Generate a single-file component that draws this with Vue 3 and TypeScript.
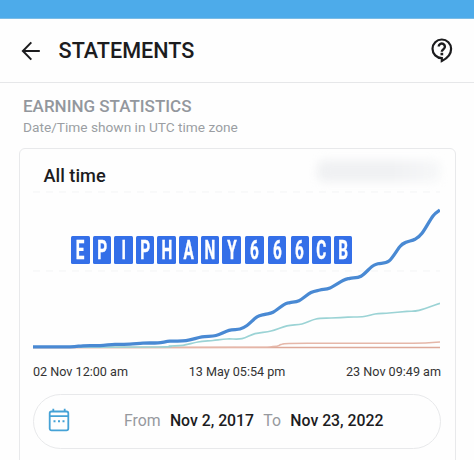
<template>
  <div class="screen">
    <div class="status-bar"></div>

    <header class="header">
      <svg class="back-icon" viewBox="0 0 20 20" aria-label="Back">
        <path d="M10.3 1.4 1.9 10 10.3 18.6M2.2 10H18.8" />
      </svg>
      <h1 class="title">STATEMENTS</h1>
      <svg class="help-icon" viewBox="0 0 22 25" aria-label="Help">
        <path class="help-bubble" d="M10.8 1.5a9.3 9.3 0 0 0 0 18.6V23C16.4 20.4 20.1 16 20.1 10.8A9.3 9.3 0 0 0 10.8 1.5Z" />
        <path class="help-mark" d="M7.7 8.6a3.1 3.1 0 1 1 4.9 2.5c-1.2.9-1.8 1.3-1.8 2.6" />
        <rect x="9.5" y="14.8" width="2.7" height="2.5" />
      </svg>
    </header>

    <section class="intro">
      <h2 class="intro-title">EARNING STATISTICS</h2>
      <p class="intro-note">Date/Time shown in UTC time zone</p>
    </section>

    <section class="card">
      <div class="card-head">
        <span class="card-title">All time</span>
        <span class="hidden-amount"></span>
      </div>

      <div class="chart">
        <svg class="chart-svg" viewBox="0 0 407 166">
          <line
            v-for="y in gridLines"
            :key="y"
            class="grid-line"
            x1="0"
            x2="407"
            :y1="y"
            :y2="y"
          />
          <path
            v-for="line in series"
            :key="line.name"
            :class="['line', line.name]"
            :d="smoothPath(line.points)"
          />
        </svg>
        <div class="watermark">
          <span
            v-for="(char, index) in watermark"
            :key="index"
            class="tile"
            :class="{ digit: isDigit(char) }"
          ><span class="char">{{ char }}</span></span>
        </div>
      </div>

      <div class="axis">
        <span v-for="label in axisLabels" :key="label">{{ label }}</span>
      </div>

      <div class="range">
        <svg class="calendar-icon" viewBox="0 0 22 24">
          <rect x="1.7" y="3.5" width="18.6" height="18.8" rx="1.8" />
          <path d="M1.7 8.2H20.3M5.3 .8V3.5M16.7 .8V3.5" />
          <path class="calendar-dots" d="M5.5 13.2h2M10 13.2h2M14.5 13.2h2" />
        </svg>
        <div class="range-text">
          <span class="range-label">From</span>
          <span class="range-date">{{ range.from }}</span>
          <span class="range-label">To</span>
          <span class="range-date">{{ range.to }}</span>
        </div>
      </div>
    </section>
  </div>
</template>

<script setup lang="ts">
type Point = [number, number]

interface Series {
  name: string
  points: Point[]
}

const watermark = [...'EPIPHANY666CB']
const axisLabels = ['02 Nov 12:00 am', '13 May 05:54 pm', '23 Nov 09:49 am']
const range = { from: 'Nov 2, 2017', to: 'Nov 23, 2022' }
const gridLines = [6, 85]

const series: Series[] = [
  {
    name: 'baseline',
    points: [[0, 161.5], [407, 161.5]]
  },
  {
    name: 'minor',
    points: [[0, 161.4], [205, 161.3], [240, 160.6], [248, 158.6], [256, 157.4], [300, 157.3], [380, 157.3], [407, 156]]
  },
  {
    name: 'secondary',
    points: [
      [0, 161.2], [125, 161], [137, 160], [150, 159.4], [165, 156], [180, 154.5], [194, 153],
      [209, 152.7], [222, 147.6], [238, 145], [254, 139.8], [269, 138], [283, 133], [298, 132],
      [315, 131.2], [331, 130.5], [342, 128], [356, 127], [374, 125.4], [386, 124.4], [407, 117.3]
    ]
  },
  {
    name: 'primary',
    points: [
      [0, 160.8], [37, 160.8], [50, 159.8], [67, 159.6], [82, 158.4], [97, 158.2], [110, 157.1],
      [125, 156.8], [137, 155.2], [153, 154.7], [169, 150.9], [183, 149.5], [196, 144.4],
      [207, 143], [214, 139.5], [224, 130.9], [232, 128.4], [240, 126.2], [251, 118.6],
      [257, 116.6], [266, 114.8], [278, 106.5], [287, 104], [297, 102], [310, 94.5],
      [317, 92.3], [328, 90.2], [339, 80.5], [345, 77.8], [356, 75], [367, 60.5],
      [373, 56.3], [382, 53.2], [389, 47.3], [400, 30], [407, 24]
    ]
  }
]

const isDigit = (char: string): boolean => /\d/.test(char)

// Catmull-Rom spline through all points
const smoothPath = (points: Point[]): string => {
  let d = `M${points[0][0]} ${points[0][1]}`
  for (let i = 0; i < points.length - 1; i++) {
    const p0 = points[i - 1] || points[i]
    const p1 = points[i]
    const p2 = points[i + 1]
    const p3 = points[i + 2] || p2
    const c1 = [p1[0] + (p2[0] - p0[0]) / 6, p1[1] + (p2[1] - p0[1]) / 6]
    const c2 = [p2[0] - (p3[0] - p1[0]) / 6, p2[1] - (p3[1] - p1[1]) / 6]
    d += `C${c1[0]} ${c1[1]} ${c2[0]} ${c2[1]} ${p2[0]} ${p2[1]}`
  }
  return d
}
</script>

<style>
body {
  margin: 0;
  background: #fefefe;
}
</style>

<style scoped>
.screen {
  display: flex;
  flex-direction: column;
  height: 460px;
  overflow: hidden;
  box-sizing: border-box;
  font-family: Roboto, 'Liberation Sans', sans-serif;
  color: #1c1c1e;
  background: #fefefe;
}

.status-bar {
  flex: none;
  height: 19px;
  box-sizing: border-box;
  background: #4dabea;
  border-bottom: 1px solid #7bbce6;
}

.header {
  flex: none;
  display: flex;
  align-items: center;
  height: 64px;
  padding: 0 21px 0 20.6px;
  box-sizing: border-box;
  border-bottom: 1px solid #e6e7e9;
}

.back-icon {
  width: 20px;
  height: 20px;
  fill: none;
  stroke: #1c1c1e;
  stroke-width: 2;
}

.title {
  margin: 0 auto 0 18px;
  font-size: 21.6px;
  font-weight: 500;
  line-height: 24px;
}

.help-icon {
  width: 22px;
  height: 25px;
  fill: #1c1c1e;
}

.help-bubble {
  fill: none;
  stroke: #1c1c1e;
  stroke-width: 2.2;
}

.help-mark {
  fill: none;
  stroke: #1c1c1e;
  stroke-width: 2.4;
}

.intro {
  flex: none;
  height: 65px;
  padding: 13px 23px 0;
  box-sizing: border-box;
}

.intro-title {
  margin: 0;
  font-size: 17px;
  font-weight: 500;
  line-height: 21px;
  color: #93979d;
}

.intro-note {
  margin: 1px 0 0;
  font-size: 13.7px;
  line-height: 19px;
  color: #9b9ea3;
}

.card {
  flex: none;
  height: 340px;
  margin: 0 18.5px;
  padding: 0 13.5px;
  box-sizing: border-box;
  border: 1.5px solid #e8e9eb;
  border-radius: 6px;
}

.card-head {
  display: flex;
  align-items: flex-start;
  justify-content: space-between;
  height: 37px;
  padding: 11px 0 0 10.5px;
  box-sizing: border-box;
}

.card-title {
  padding-top: 5px;
  font-size: 18.2px;
  font-weight: 500;
  line-height: 22px;
}

.hidden-amount {
  width: 124px;
  height: 22px;
  border-radius: 8px;
  background: linear-gradient(90deg, #f0f1f3 60%, #f7f8f9);
  filter: blur(4px);
}

.chart {
  position: relative;
  height: 166px;
}

.chart-svg {
  display: block;
  width: 407px;
  height: 166px;
}

.grid-line {
  stroke: #f3f4f5;
  stroke-width: 1;
  stroke-dasharray: 7 6;
}

.line {
  fill: none;
  stroke-width: 1.5;
}

.baseline {
  stroke: #dda999;
}

.minor {
  stroke: #e5b7a9;
}

.secondary {
  stroke: #9bd3d5;
  stroke-width: 1.7;
}

.primary {
  stroke: #4989d3;
  stroke-width: 3.3;
}

.watermark {
  position: absolute;
  left: 38px;
  top: 49.5px;
  display: flex;
  gap: 3px;
}

.tile {
  display: flex;
  align-items: center;
  justify-content: center;
  width: 18.6px;
  height: 28px;
  border-radius: 1.5px;
  background: #346fe8;
}

.tile.digit {
  margin-left: 1.2px;
}

.char {
  font-size: 25.5px;
  font-weight: 700;
  line-height: 28px;
  color: #fff;
  -webkit-text-stroke: 0.4px #fff;
  transform: scaleX(0.6);
}

.axis {
  display: flex;
  justify-content: space-between;
  padding-top: 12px;
  font-size: 12.6px;
  line-height: 16px;
  color: #333;
}

.range {
  display: flex;
  align-items: center;
  height: 55px;
  margin-top: 14px;
  padding: 0 14px;
  box-sizing: border-box;
  border: 1.3px solid #e8e9eb;
  border-radius: 28px;
}

.calendar-icon {
  width: 22px;
  height: 24px;
  margin-top: -3px;
  fill: none;
  stroke: #45a2d6;
  stroke-width: 1.8;
}

.calendar-dots {
  stroke-width: 2;
}

.range-text {
  display: flex;
  gap: 9.3px;
  margin: -2px 0 0 54px;
  font-size: 15.8px;
  line-height: 20px;
  white-space: nowrap;
}

.range-label {
  color: #97999e;
}

.range-date {
  font-weight: 500;
}
</style>
